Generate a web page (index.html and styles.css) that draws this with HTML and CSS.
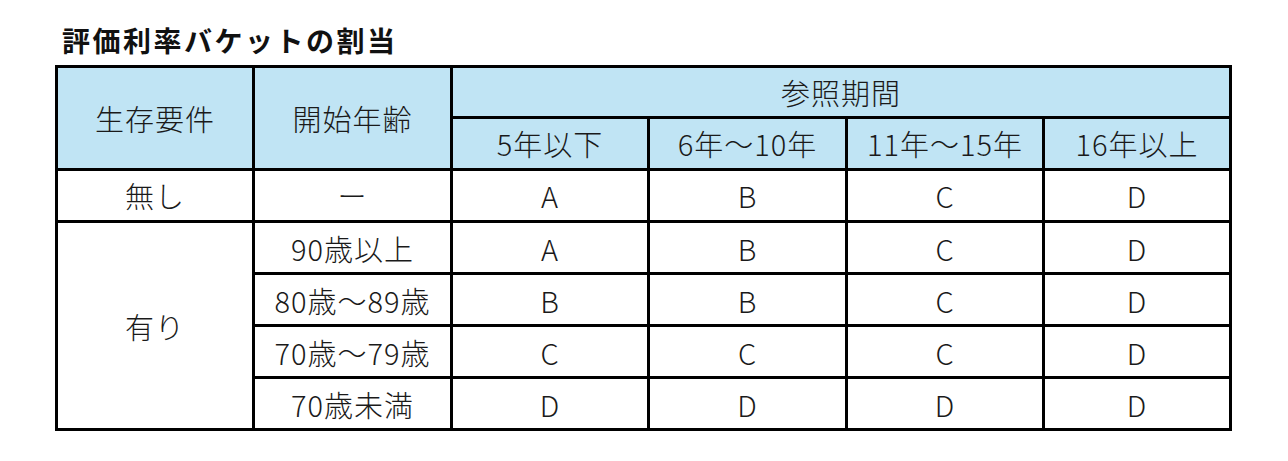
FILE: index.html
```html
<!DOCTYPE html>
<html lang="ja">
<head>
<meta charset="utf-8">
<link rel="stylesheet" href="styles.css">
</head>
<body>
<h1 class="title">評価利率バケットの割当</h1>
<table class="grid">
  <colgroup>
    <col class="c1"><col class="c2"><col class="c3"><col class="c4"><col class="c5"><col class="c6">
  </colgroup>
  <thead>
    <tr class="r1">
      <th rowspan="2">生存要件</th>
      <th rowspan="2">開始年齢</th>
      <th colspan="4">参照期間</th>
    </tr>
    <tr class="r2">
      <th>5年以下</th>
      <th>6年～10年</th>
      <th>11年～15年</th>
      <th>16年以上</th>
    </tr>
  </thead>
  <tbody>
    <tr class="r3">
      <td>無し</td><td>ー</td><td>A</td><td>B</td><td>C</td><td>D</td>
    </tr>
    <tr class="r4">
      <td rowspan="4">有り</td><td>90歳以上</td><td>A</td><td>B</td><td>C</td><td>D</td>
    </tr>
    <tr class="r5">
      <td>80歳～89歳</td><td>B</td><td>B</td><td>C</td><td>D</td>
    </tr>
    <tr class="r6">
      <td>70歳～79歳</td><td>C</td><td>C</td><td>C</td><td>D</td>
    </tr>
    <tr class="r7">
      <td>70歳未満</td><td>D</td><td>D</td><td>D</td><td>D</td>
    </tr>
  </tbody>
</table>
</body>
</html>
```

FILE: styles.css
```css
html, body {
  margin: 0;
  padding: 0;
  background: #ffffff;
}
body {
  font-family: "Noto Sans CJK JP", "Noto Sans", sans-serif;
  color: #1a1a1a;
  padding: 23px 0 0 55px;
}
.title {
  margin: 0 0 8px 7px;
  font-size: 28px;
  font-weight: 700;
  line-height: 34px;
  letter-spacing: 2.5px;
  color: #111;
}
.grid {
  border-collapse: collapse;
  table-layout: fixed;
  width: 1174px;
  border: 3px solid #000;
}
.c1 { width: 197px; }
.c2 { width: 198px; }
.c3 { width: 197px; }
.c4 { width: 198px; }
.c5 { width: 197px; }
.c6 { width: 187px; }
.grid th, .grid td {
  border: 3px solid #000;
  padding: 0;
  text-align: center;
  vertical-align: middle;
  font-size: 29px;
  font-weight: 300;
  line-height: 34px;
  letter-spacing: 1px;
}
.grid th {
  background: #c0e4f4;
}
.r1 { height: 51px; }
.r2 { height: 51.5px; }
.r3 { height: 52.5px; }
.r4 { height: 52px; }
.r5 { height: 52px; }
.r6 { height: 52px; }
.r7 { height: 52px; }
```
